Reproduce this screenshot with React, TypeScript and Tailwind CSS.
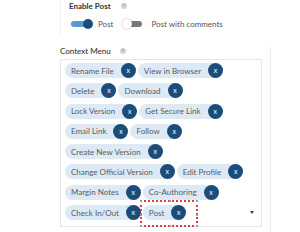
import React from 'react';

const rows: string[][] = [
  ['Rename File', 'View in Browser'],
  ['Delete', 'Download'],
  ['Lock Version', 'Get Secure Link'],
  ['Email Link', 'Follow'],
  ['Create New Version'],
  ['Change Official Version', 'Edit Profile'],
  ['Margin Notes', 'Co-Authoring'],
];

function Help() {
  return (
    <span className="flex h-[6px] w-[6px] items-center justify-center rounded-full bg-[#d4d4d4] text-[4px] font-bold leading-none text-[#777]">
      ?
    </span>
  );
}

function Chip({ label, highlight }: { label: string; highlight?: boolean }) {
  return (
    <span className="relative flex h-[15px] items-center gap-[7px] rounded-full bg-[#ddeaf6] pl-[6px] text-[8px] leading-none text-[#5a5a5a]">
      {label}
      <span className="flex h-[15px] w-[15px] items-center justify-center rounded-full bg-[#1b4d7c] text-[7px] leading-none text-white">
        x
      </span>
      {highlight && (
        <span className="pointer-events-none absolute -bottom-[7px] -left-[3px] -right-[12px] -top-[5px] border-2 border-dotted border-[#e23a4c]">
          <span className="absolute -left-[2px] -top-[2px] h-[2px] w-[2px] bg-[#999]" />
          <span className="absolute -right-[2px] -top-[2px] h-[2px] w-[2px] bg-[#999]" />
          <span className="absolute -bottom-[2px] -left-[2px] h-[2px] w-[2px] bg-[#999]" />
          <span className="absolute -bottom-[2px] -right-[2px] h-[2px] w-[2px] bg-[#999]" />
          <span className="absolute -top-[2px] left-1/2 h-[2px] w-[2px] bg-[#999]" />
          <span className="absolute -bottom-[2px] left-1/2 h-[2px] w-[2px] bg-[#999]" />
          <span className="absolute -left-[2px] top-1/2 h-[2px] w-[2px] bg-[#999]" />
          <span className="absolute -right-[2px] top-1/2 h-[2px] w-[2px] bg-[#999]" />
        </span>
      )}
    </span>
  );
}

export default function App() {
  return (
    <div className="h-[232px] w-[300px] overflow-hidden bg-white font-['Lato',sans-serif]">
      {/* Enable Post */}
      <div className="ml-[60px] h-[36px] border-l border-[#f2f2f2] pl-[8px] pt-[1px]">
        <div className="flex h-[10px] items-center">
          <span className="w-[52px] text-[8px] font-bold leading-none text-[#333]">Enable Post</span>
          <Help />
        </div>
        <div className="mt-[8px] flex h-[10px] items-center">
          <span className="relative ml-[2px] flex h-[10px] w-[22px] items-center">
            <span className="h-[6px] w-[20px] rounded-full bg-[#5b9bd5]" />
            <span className="absolute right-0 top-0 h-[10px] w-[10px] rounded-full bg-[#1b4d7c]" />
          </span>
          <span className="ml-[5px] text-[8px] leading-none text-[#555]">Post</span>
          <span className="relative ml-[9px] flex h-[10px] w-[22px] items-center">
            <span className="ml-[2px] h-[6px] w-[18px] rounded-full bg-[#777]" />
            <span className="absolute left-0 top-0 h-[10px] w-[10px] rounded-full bg-white shadow-[0_0_2px_rgba(0,0,0,0.35)]" />
          </span>
          <span className="ml-[7px] text-[8px] leading-none text-[#555]">Post with comments</span>
        </div>
      </div>

      {/* Context Menu */}
      <div className="flex">
        <div className="ml-[60px] mt-[10px] w-[202px]">
          <div className="flex h-[10px] items-center">
            <span className="w-[60px] text-[8px] font-medium leading-none text-[#333]">Context Menu</span>
            <Help />
          </div>
          <div className="mt-[3px] flex h-[168px] flex-col gap-y-[5.3px] border border-[#e6e6e6] px-[4px] pt-[3px]">
            {rows.map((row, i) => (
              <div key={i} className="flex gap-x-[2px]">
                {row.map((label) => (
                  <Chip key={label} label={label} />
                ))}
              </div>
            ))}
            <div className="flex items-center gap-x-[2px]">
              <Chip label="Check In/Out" />
              <Chip label="Post" highlight />
              <span className="ml-auto mr-[3px] h-0 w-0 border-l-[2px] border-r-[2px] border-t-[3px] border-l-transparent border-r-transparent border-t-[#444]" />
            </div>
          </div>
        </div>
        <div className="ml-[8px] mt-[11px] h-[200px] border-l border-[#ececec]" />
      </div>
    </div>
  );
}
